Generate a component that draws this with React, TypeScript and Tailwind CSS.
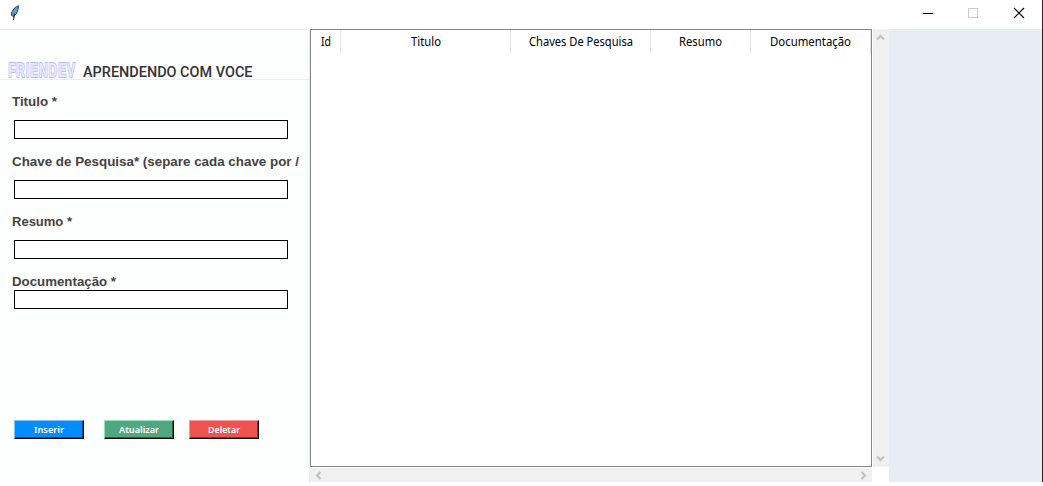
import React from "react";

const sans = "font-['Liberation_Sans',sans-serif]";

function Field({ label, width, gap }: { label: string; width: number; gap: string }) {
  return (
    <div>
      <div className={`ml-3 h-[19px] text-[13.4px] leading-[19px] ${sans} font-bold text-[#454242]`}>
        <svg className="block overflow-visible" width={width} height="19">
          <text x="0" y="14" textLength={width} lengthAdjust="spacingAndGlyphs" fill="currentColor">{label}</text>
        </svg>
      </div>
      <input aria-label={label} className={`ml-[14px] block h-[19px] w-[274px] border border-black bg-white outline-none ${gap}`} />
    </div>
  );
}

function ActionButton({ label, width, className }: { label: string; width: number; className: string }) {
  return (
    <button className={`flex h-[19px] w-[70px] items-center justify-center border border-r-black border-b-black font-['Noto_Sans',sans-serif] text-[9.6px] leading-none font-semibold text-white ${className}`}>
      <svg className="block overflow-visible" width={width} height="17">
        <text x="0" y="12" textLength={width} lengthAdjust="spacingAndGlyphs" fill="currentColor">{label}</text>
      </svg>
    </button>
  );
}

function Chevron({ className }: { className: string }) {
  return (
    <svg className={className} width="9" height="7" viewBox="0 0 9 7" fill="none" stroke="#bfbfbf" strokeWidth="2">
      <path d="M1 5.5 4.5 2 8 5.5" />
    </svg>
  );
}

const columns = [
  { name: "Id", cell: "w-[30px] border-r", width: 10 },
  { name: "Titulo", cell: "w-[170px] border-r", width: 30 },
  { name: "Chaves De Pesquisa", cell: "w-[140px] border-r", width: 104 },
  { name: "Resumo", cell: "w-[100px] border-r", width: 43 },
  { name: "Documentação", cell: "w-[120px] border-r", width: 81 },
];

export default function App() {
  return (
    <div className="flex h-[486px] w-[1043px] overflow-hidden bg-white">
      <div className="flex w-[1042px] flex-col">
        <header className="flex h-[29px] items-start">
          <svg className="mt-[5px] ml-[10px]" width="10" height="16" viewBox="0 0 10 16">
            <path d="M8.5.7 8.2 4 6.5 8.5 3.5 11.5 1.5 10.5 1.8 7 4.5 3Z" fill="#5b9fe6" stroke="#26303f" strokeWidth=".9" />
            <path d="M4.5 8.5 3.5 15" stroke="#111" fill="none" />
          </svg>
          <svg className="ml-auto" width="124" height="29" shapeRendering="crispEdges">
            <path d="M5 13.5h10" stroke="#000" />
            <rect x="50.5" y="8.5" width="9" height="9" fill="none" stroke="#ccc" />
            <path d="m96 8 10 10m0-10L96 18" stroke="#000" shapeRendering="auto" strokeWidth="1.2" />
          </svg>
        </header>
        <main className="flex h-[453px]">
          <section className="w-[310px] border-t border-r border-t-[#e6e6e6] border-r-[#e8ecf5] bg-[#fdfefe]">
            <div className="flex h-[50px] items-end border-b border-[#e8ecf5]">
              <svg className="ml-[7px] block shrink-0 overflow-visible" width="71" height="30">
                <g transform="scale(0.57 1)">
                  <text x="2" y="28" className={`${sans} text-[21px] font-bold tracking-[1.6px]`} fill="#e3e8ff" stroke="#b4c0fc" strokeWidth="1.8" paintOrder="stroke">FRIENDEV</text>
                </g>
              </svg>
              <svg className="ml-[5px] block shrink-0" width="172" height="24">
                <text x="0" y="22" textLength="169.5" lengthAdjust="spacingAndGlyphs" className="font-['Roboto',sans-serif] text-[13.8px] font-medium" fill="#333">APRENDENDO COM VOCE</text>
              </svg>
            </div>
            <div className="pt-3">
              <Field label="Titulo *" width={45} gap="mt-[9px] mb-[13px]" />
              <Field label="Chave de Pesquisa* (separe cada chave por /" width={287} gap="mt-[9px] mb-[13px]" />
              <Field label="Resumo *" width={60} gap="mt-[9px] mb-[13px]" />
              <Field label="Documentação *" width={104} gap="-mt-px" />
            </div>
            <div className="mt-[111px] ml-[14px] flex">
              <ActionButton label="Inserir" width={30} className="border-t-[#7bc3fc] border-l-[#7bc3fc] bg-[#038cfc] shadow-[inset_-1px_-1px_0_#024a8c]" />
              <ActionButton label="Atualizar" width={40} className="ml-5 border-t-[#95e3bd] border-l-[#95e3bd] bg-[#4fa882] shadow-[inset_-1px_-1px_0_#2c604a]" />
              <ActionButton label="Deletar" width={32} className="ml-[15px] border-t-[#ff9a9a] border-l-[#ff9a9a] bg-[#ef5350] shadow-[inset_-1px_-1px_0_#8b302e]" />
            </div>
          </section>
          <section className="w-[562px]">
            <div className="h-[438px] border border-[#828790] bg-white">
              <div className="flex h-6">
                {columns.map((c) => (
                  <div key={c.name} className={`flex shrink-0 justify-center border-[#e5e5e5] ${c.cell}`}>
                    <svg className="block overflow-visible" width={c.width} height="24">
                      <text x="0" y="16" textLength={c.width} className="font-['Noto_Sans',sans-serif] text-[12px]" lengthAdjust="spacingAndGlyphs">{c.name}</text>
                    </svg>
                  </div>
                ))}
              </div>
            </div>
            <div className="mt-px flex h-[14px] items-center justify-between bg-[#f0f0f0] px-1">
              <Chevron className="-rotate-90" />
              <Chevron className="rotate-90" />
            </div>
          </section>
          <div className="ml-px flex h-[438px] w-4 flex-col items-start justify-between bg-[#f0f0f0] py-[5px] pl-[3px]">
            <Chevron className="" />
            <Chevron className="rotate-180" />
          </div>
          <aside className="flex-1 bg-[#e8ecf5]" />
        </main>
      </div>
      <div className="h-[482px] w-px bg-[#222]" />
    </div>
  );
}
